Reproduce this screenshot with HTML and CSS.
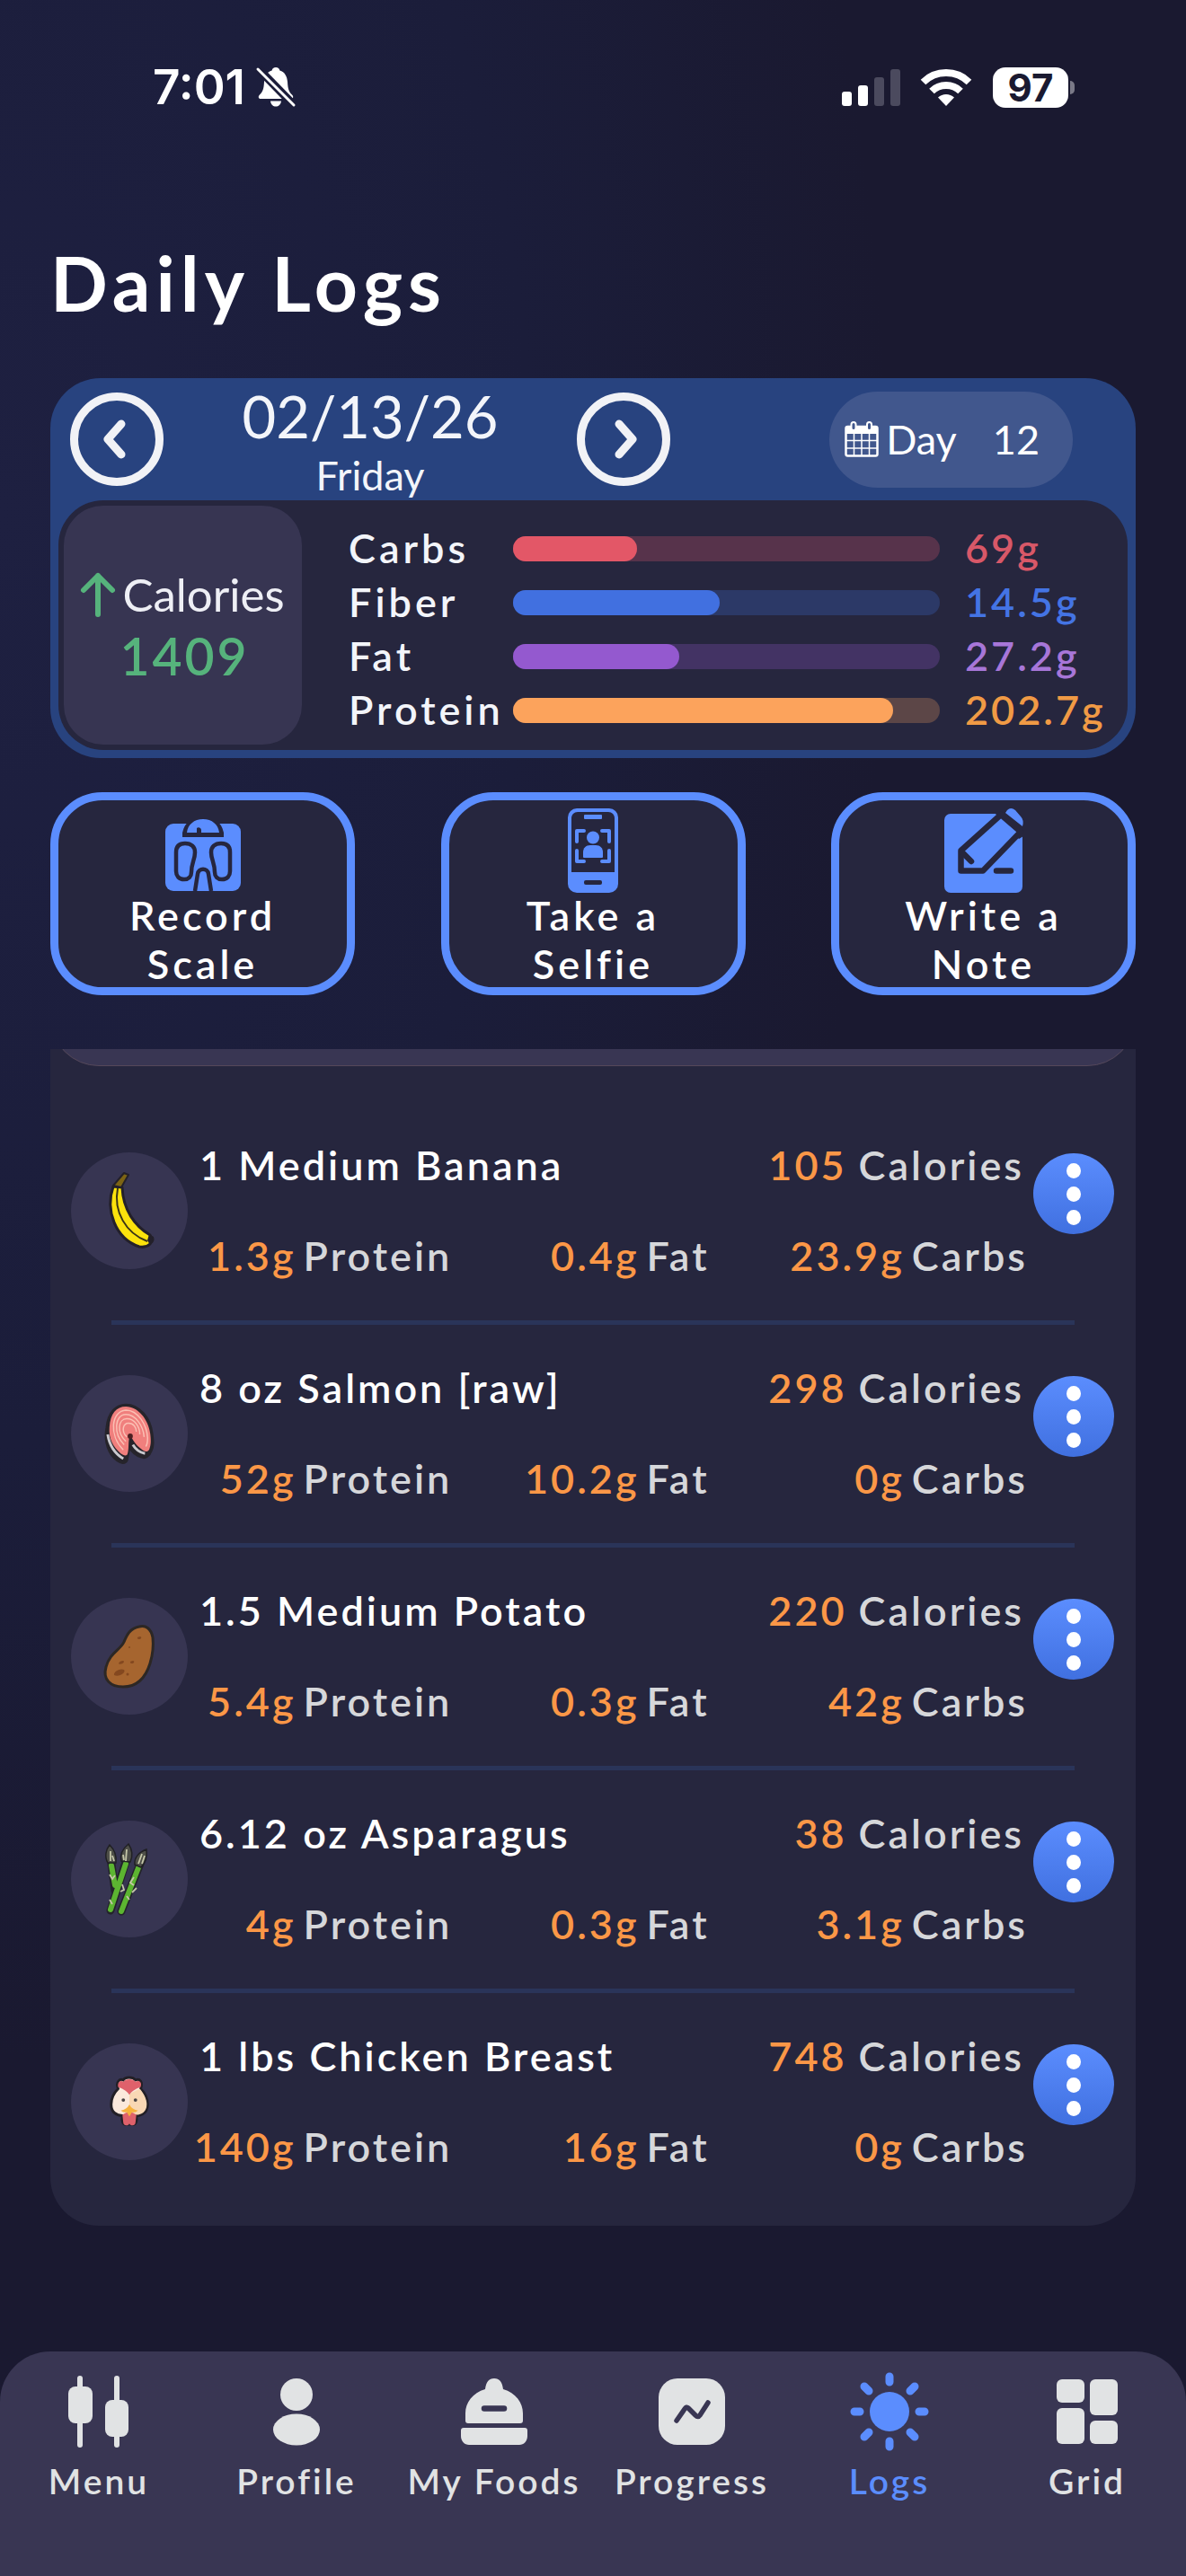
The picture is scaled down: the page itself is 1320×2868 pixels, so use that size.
FILE: index.html
```html
<!DOCTYPE html>
<html lang="en">
<head>
<meta charset="utf-8">
<meta name="viewport" content="width=device-width, initial-scale=1">
<title>Daily Logs</title>
<link rel="stylesheet" href="styles.css">
</head>
<body>
<div class="app">
  <div class="status">
    <div class="status-time">
      <span>7:01</span>
      <svg width="44" height="46" viewBox="0 0 44 46" aria-hidden="true">
        <path fill="#fff" d="M22 1c2.500 0 4 1.500 4.400 3.400C32 6 34.500 11 35 17c.4 8 1.500 11 5 14.500 2 2 1.500 4.500-1 4.500H5c-2.500 0-3-2.500-1-4.500C7.500 28 8.600 25 9 17c.5-6 3-11 8.600-12.600C18 2.500 19.500 1 22 1zM16 38.500h12c-.6 4-3 6-6 6s-5.400-2-6-6z"/>
        <path stroke="#1c1d3a" stroke-width="9" d="M2 2l40 41"/>
        <path stroke="#fff" stroke-width="3" stroke-linecap="round" d="M2 3l40 40"/>
      </svg>
    </div>
    <div class="status-signs">
      <svg width="64" height="42" viewBox="0 0 64 42" aria-hidden="true">
        <rect x="0" y="26" width="11" height="16" rx="3" fill="#fff"/>
        <rect x="18" y="19" width="11" height="23" rx="3" fill="#fff"/>
        <rect x="36" y="10" width="11" height="32" rx="3" fill="#4b4a5e"/>
        <rect x="54" y="1" width="11" height="41" rx="3" fill="#4b4a5e"/>
      </svg>
      <svg width="56" height="42" viewBox="1 0 56 42" aria-hidden="true">
        <path fill="none" stroke="#fff" stroke-width="8" d="M3.500 15.500a36.500 36.500 0 0 1 51 0M13 25.500a23 23 0 0 1 32 0"/>
        <path fill="#fff" d="M29 42l-9-9.500a13 13 0 0 1 18 0z"/>
      </svg>
      <div class="battery"><span>97</span></div>
    </div>
  </div>

  <main class="content">
    <h1 class="title">Daily Logs</h1>

    <section class="summary" aria-label="Daily summary">
      <div class="summary-head">
        <button class="round" type="button" aria-label="Previous day">
          <svg width="28" height="44" viewBox="0 0 28 44" aria-hidden="true"><path d="M19 5L4 22l15 17"/></svg>
        </button>
        <div class="date"><span class="date-day">02/13/26</span><span class="date-name">Friday</span></div>
        <button class="round" type="button" aria-label="Next day">
          <svg width="28" height="44" viewBox="0 0 28 44" aria-hidden="true"><path d="M9 5l15 17L9 39"/></svg>
        </button>
        <button class="day" type="button">
          <svg width="38" height="40" viewBox="0 0 38 40" aria-hidden="true">
            <rect x="1.500" y="6" width="35" height="32.500" rx="2" fill="none" stroke="#fff" stroke-width="2.500"/>
            <path fill="#fff" d="M2 5h34v9H2z"/>
            <path stroke="#fff" stroke-width="1.500" d="M10.500 13v25M19 13v25M27.500 13v25M2 21.500h34M2 30h34"/>
            <rect x="7.500" y="1" width="5" height="9" rx="2.500" fill="#41578d" stroke="#fff" stroke-width="2"/>
            <rect x="25" y="1" width="5" height="9" rx="2.500" fill="#41578d" stroke="#fff" stroke-width="2"/>
          </svg>
          <span>Day</span><span class="day-count">12</span>
        </button>
      </div>
      <div class="summary-body">
        <div class="calories">
          <div class="calories-name">
            <svg width="38" height="50" viewBox="0 0 38 50" aria-hidden="true"><path d="M19 47V4M3 20L19 4l16 16"/></svg>
            <span>Calories</span>
          </div>
          <strong class="calories-total">1409</strong>
        </div>
        <ul class="macros">
          <li class="macro carbs"><span class="macro-name">Carbs</span><span class="bar"><span class="fill" style="width:29%"></span></span><span class="macro-value">69g</span></li>
          <li class="macro fiber"><span class="macro-name">Fiber</span><span class="bar"><span class="fill" style="width:48.500%"></span></span><span class="macro-value">14.5g</span></li>
          <li class="macro fat"><span class="macro-name">Fat</span><span class="bar"><span class="fill" style="width:39%"></span></span><span class="macro-value">27.2g</span></li>
          <li class="macro protein"><span class="macro-name">Protein</span><span class="bar"><span class="fill" style="width:89%"></span></span><span class="macro-value">202.7g</span></li>
        </ul>
      </div>
    </section>

    <div class="actions">
      <button class="action" type="button">
        <svg width="88" height="94" viewBox="-2 -12 88 94" aria-hidden="true">
          <rect y="5" width="84" height="75" rx="9" fill="#5b8dfe"/>
          <path fill="#26263e" d="M19 20v-5C21 8 23 4 26 4h32c3 0 5 4 7 11v5z"/>
          <path fill="#5b8dfe" d="M24 15C25 6 32 0 42 0s17 6 18 15H40v-3a3 3 0 0 0-5-2v5z"/>
          <path fill="none" stroke="#26263e" stroke-width="4.500" stroke-linejoin="round" d="M22 27c-7 0-10 4-10 10v21c0 5 3 9 9 9 5 0 8-3 8-8 0-10 4-14 4-22 0-6-4-10-11-10zM62 27c7 0 10 4 10 10v21c0 5-3 9-9 9-5 0-8-3-8-8 0-10-4-14-4-22 0-6 4-10 11-10zM33 80l3-19c1-7 11-7 12 0l3 19"/>
        </svg>
        <span>Record<br>Scale</span>
      </button>
      <button class="action" type="button">
        <svg width="56" height="94" viewBox="0 0 56 94" aria-hidden="true">
          <rect width="56" height="94" rx="10" fill="#5b8dfe"/>
          <path fill="#26263e" d="M4 71V11c0-4 3-7 7-7h34c4 0 7 3 7 7v60z"/>
          <rect x="18" y="7" width="20" height="5" rx="1" fill="#5b8dfe"/>
          <rect x="18" y="80" width="20" height="5" rx="2" fill="#26263e"/>
          <path fill="none" stroke="#5b8dfe" stroke-width="4" stroke-linecap="round" stroke-linejoin="round" d="M10 37V25h8M38 25h8v12M46 47v12h-8M18 59h-8V47"/>
          <circle cx="28" cy="32.500" r="7" fill="#5b8dfe"/>
          <path fill="#5b8dfe" d="M17 54v-5c0-5 3-8 8-8h6c5 0 8 3 8 8v5q0 1-1 1H18q-1 0-1-1z"/>
        </svg>
        <span>Take a<br>Selfie</span>
      </button>
      <button class="action" type="button">
        <svg width="88" height="94" viewBox="0 0 88 94" aria-hidden="true">
          <rect y="6" width="87" height="88" rx="7" fill="#5b8dfe"/>
          <path fill="#26263e" d="M56 5L64-1h24v32l-5 3z"/>
          <path fill="#5b8dfe" stroke="#26263e" stroke-width="6.500" stroke-linejoin="round" d="M63 7l22 19-42 43.500H18.500V47z"/>
          <path fill="none" stroke="#26263e" stroke-width="6.500" stroke-linecap="round" d="M20 49l10 10M58 69.500h16"/>
          <path fill="#5b8dfe" d="M70 2q4-4 9 0l6 7q4 4 2 11L68 5z"/>
        </svg>
        <span>Write a<br>Note</span>
      </button>
    </div>

    <section class="log" aria-label="Foods logged">
      <div class="log-peek"><div class="log-peek-card"></div></div>
      <ul class="entries">
        <li class="entry">
          <div class="entry-row">
            <div class="food">
              <svg width="60" height="86" viewBox="0 0 60 86" aria-hidden="true">
                <path fill="#fbe20c" stroke="#23202a" stroke-width="3" stroke-linejoin="round" d="M12 16C3 42 14 74 41 83c5 1 9 0 12-3l2-5-2-5C36 60 23 42 22 17z"/>
                <path fill="none" stroke="#3a3516" stroke-width="2" d="M17 18C12 44 26 68 50 77"/>
                <path fill="#7d6414" stroke="#23202a" stroke-width="2" stroke-linejoin="round" d="M12 15l12-14 5 2-8 14z"/>
                <path fill="#23202a" d="M52 69l5 3q2 6-4 9l-3-5z"/>
              </svg>
            </div>
            <div class="entry-text">
              <div class="entry-top"><span class="name">1 Medium Banana</span><span class="kcal"><b>105</b>Calories</span></div>
              <div class="entry-macros"><span><b>1.3g</b>Protein</span><span><b>0.4g</b>Fat</span><span><b>23.9g</b>Carbs</span></div>
            </div>
            <button class="more" type="button" aria-label="Banana options"><i></i><i></i><i></i></button>
          </div>
        </li>
        <li class="entry">
          <div class="entry-row">
            <div class="food">
              <svg width="56" height="70" viewBox="0 0 58 70" aria-hidden="true">
                <path fill="#26242b" stroke="#26242b" stroke-width="3" stroke-linejoin="round" d="M3 28C5 10 14 2 25 2c15 0 28 15 30 33 1 8 2 14-1 20-2 6-7 9-11 7-7-2-11-6-14-12l-3 16c-2 4-7 3-11 0C5 59 0 44 3 28z"/>
                <path fill="none" stroke="#c9c9ce" stroke-width="3" d="M4 36c2 13 8 22 18 28M33 48c3 5 7 9 14 10"/>
                <path fill="#f07f7d" d="M6 28C7 12 14 4 25 4c14 0 26 15 28 31 1 8 1 13-1 18-2 4-6 3-9 0-7-5-10-11-13-16-3 6-1 14-3 21-1 4-5 2-8 0C10 50 5 41 6 28z"/>
                <path fill="none" stroke="#fbc0b4" stroke-width="1.500" d="M22 54C5 37 8 9 25 8c14 0 24 17 25 32 0 4 0 7-2 10M23 48C10 35 12 13 25 13c11 0 20 13 21 26M25 44c-11-10-9-26 1-26 9 0 15 9 15 18M26 39c-7-7-4-16 2-16 6 0 9 5 9 10"/>
                <circle cx="30" cy="38" r="3" fill="#4a2022"/>
              </svg>
            </div>
            <div class="entry-text">
              <div class="entry-top"><span class="name">8 oz Salmon [raw]</span><span class="kcal"><b>298</b>Calories</span></div>
              <div class="entry-macros"><span><b>52g</b>Protein</span><span><b>10.2g</b>Fat</span><span><b>0g</b>Carbs</span></div>
            </div>
            <button class="more" type="button" aria-label="Salmon options"><i></i><i></i><i></i></button>
          </div>
        </li>
        <li class="entry">
          <div class="entry-row">
            <div class="food">
              <svg width="56" height="52" viewBox="2 11 56 52" aria-hidden="true">
                <path fill="#a6652f" stroke="#2c2724" stroke-width="3" d="M56 16C54 6 48 2 41 4 30 6 27 14 24 21 20 30 8 33 4 49 0 63 9 71 23 71c16 0 25-10 30-26 3-10 4-20 3-29z"/>
                <path fill="#84481f" d="M13 58c-1-4 7-8 11-6 3 3-6 9-11 6zM18 45c1-3 6-4 6-2s-5 4-6 2zM31 43c3-2 5-1 4 1s-5 1-4-1zM39 16c3-2 5-1 4 1s-5 1-4-1z"/>
                <circle cx="28" cy="57" r="1.500" fill="#84481f"/><circle cx="30" cy="27" r="1" fill="#84481f"/>
              </svg>
            </div>
            <div class="entry-text">
              <div class="entry-top"><span class="name">1.5 Medium Potato</span><span class="kcal"><b>220</b>Calories</span></div>
              <div class="entry-macros"><span><b>5.4g</b>Protein</span><span><b>0.3g</b>Fat</span><span><b>42g</b>Carbs</span></div>
            </div>
            <button class="more" type="button" aria-label="Potato options"><i></i><i></i><i></i></button>
          </div>
        </li>
        <li class="entry">
          <div class="entry-row">
            <div class="food">
              <svg width="50" height="86" viewBox="4 0 50 86" aria-hidden="true">
                <g stroke="#23232a" stroke-width="9" stroke-linecap="round"><path d="M9 26l4 30M25 24L8 78M41 26L20 79"/></g>
                <g stroke="#5cb531" stroke-width="6" stroke-linecap="round"><path d="M9 28l4 22M25 26L8 77M40 28L20 79"/></g>
                <g fill="#4e4f48" stroke="#202024" stroke-width="1.500"><path d="M5 25C1 18 3 10 7 5c5 5 8 12 7 20zM20 23c-2-7 2-14 8-19 4 6 5 13 2 20zM35 27c-1-8 5-14 13-17 1 8-1 15-6 20z"/></g>
                <g fill="none" stroke="#c4c6a8" stroke-width="1.800"><path d="M8 12v11M26 10l-1 13M43 15l-4 11M10 17l2 6M22 16l1 6M46 17l-3 9M7 38l3 5 3-4M21 49l2 6-4 2M34 41l-4 6 4 3M29 66l-3-4M7 66l3 5M37 53l-5 5"/></g>
              </svg>
            </div>
            <div class="entry-text">
              <div class="entry-top"><span class="name">6.12 oz Asparagus</span><span class="kcal"><b>38</b>Calories</span></div>
              <div class="entry-macros"><span><b>4g</b>Protein</span><span><b>0.3g</b>Fat</span><span><b>3.1g</b>Carbs</span></div>
            </div>
            <button class="more" type="button" aria-label="Asparagus options"><i></i><i></i><i></i></button>
          </div>
        </li>
        <li class="entry">
          <div class="entry-row">
            <div class="food">
              <svg width="40" height="56" viewBox="2 0 40 58" aria-hidden="true">
                <path fill="#fbe9dc" stroke="#221f26" stroke-width="3" d="M9 14C6 6 11 2 15 4c2-4 11-4 14 0 5-2 9 2 6 10 5 5 8 12 8 18 0 9-6 13-13 13 1 6 0 10-4 10h-8c-4 0-5-4-4-10C7 45 1 41 1 32c0-6 3-13 8-18z"/>
                <path fill="#f9d8b4" d="M22 20l12-6c5 6 8 13 8 18 0 8-6 12-12 12h-8z"/>
                <path fill="#df616b" d="M9 12c-1-6 3-8 6-6 2-4 12-4 14 0 4-2 8 0 6 6-4 2-9 3-13 9-4-6-9-7-13-9zM14 44q8-6 16 0l-1 9c0 4-6 4-7 1-1 3-7 3-7-1z"/>
                <path fill="#f6b13d" d="M12 39q7-1 10-7 3 6 10 7-4 3-7 2l-3 5-3-5q-3 1-7-2z"/>
                <circle cx="15" cy="27" r="2" fill="#4a4545"/><circle cx="29" cy="27" r="2" fill="#4a4545"/>
              </svg>
            </div>
            <div class="entry-text">
              <div class="entry-top"><span class="name">1 lbs Chicken Breast</span><span class="kcal"><b>748</b>Calories</span></div>
              <div class="entry-macros"><span><b>140g</b>Protein</span><span><b>16g</b>Fat</span><span><b>0g</b>Carbs</span></div>
            </div>
            <button class="more" type="button" aria-label="Chicken options"><i></i><i></i><i></i></button>
          </div>
        </li>
      </ul>
    </section>
  </main>

  <nav class="tabs" aria-label="Main">
    <a class="tab" href="#menu">
      <svg width="88" height="88" viewBox="0 0 88 88" aria-hidden="true">
        <path stroke="currentColor" stroke-width="6" stroke-linecap="round" d="M23 7v74M64 7v74"/>
        <rect x="10" y="16" width="27" height="41" rx="8" fill="currentColor"/><rect x="51" y="31" width="26" height="41" rx="8" fill="currentColor"/>
      </svg>
      <span>Menu</span>
    </a>
    <a class="tab" href="#profile">
      <svg width="88" height="88" viewBox="0 0 88 88" aria-hidden="true"><circle cx="44" cy="25" r="18" fill="currentColor"/><ellipse cx="44" cy="64" rx="26" ry="17.500" fill="currentColor"/></svg>
      <span>Profile</span>
    </a>
    <a class="tab" href="#foods">
      <svg width="88" height="88" viewBox="0 0 88 88" aria-hidden="true">
        <path fill="currentColor" d="M15 57q-3 0-3-3v-8c0-12 8-23 22-27 1-8 4-12 10-12s9 4 10 12c14 4 22 15 22 27v8q0 3-3 3z"/>
        <path stroke="#393653" stroke-width="6.500" stroke-linecap="round" d="M33 40.500h22"/>
        <path fill="currentColor" d="M10 62h68q3 0 3 3v6c0 6-4 10-9 10H16c-5 0-9-4-9-10v-6q0-3 3-3z"/>
      </svg>
      <span>My Foods</span>
    </a>
    <a class="tab" href="#progress">
      <svg width="88" height="88" viewBox="0 0 88 88" aria-hidden="true">
        <rect x="7" y="7" width="74" height="74" rx="21" fill="currentColor"/>
        <path fill="none" stroke="#393653" stroke-width="5.500" stroke-linecap="round" stroke-linejoin="round" d="M27 54l9-13q2-3 4-1l8 8q3 3 5 0l9-14"/>
      </svg>
      <span>Progress</span>
    </a>
    <a class="tab active" href="#logs" aria-current="page">
      <svg width="88" height="88" viewBox="0 0 88 88" aria-hidden="true">
        <circle cx="44" cy="44" r="22" fill="currentColor"/>
        <path stroke="currentColor" stroke-width="9" stroke-linecap="round" d="M44 5v6M44 77v6M5 44h6M77 44h6M16 16l5 5M67 67l5 5M16 72l5-5M67 21l5-5"/>
      </svg>
      <span>Logs</span>
    </a>
    <a class="tab" href="#grid">
      <svg width="88" height="88" viewBox="0 0 88 88" aria-hidden="true">
        <g fill="currentColor"><rect x="10" y="8" width="31" height="26" rx="6"/><rect x="10" y="40" width="31" height="40" rx="6"/><rect x="47" y="8" width="31" height="40" rx="6"/><rect x="47" y="54" width="31" height="26" rx="6"/></g>
      </svg>
      <span>Grid</span>
    </a>
  </nav>
</div>
</body>
</html>
```
FILE: styles.css
```css
* { box-sizing: border-box; }

body {
  margin: 0;
  background: #1a1930;
  color: #fff;
  font-family: Lato, "Noto Sans", sans-serif;
  font-size: 45px;
  font-weight: 600;
  line-height: 54px;
}

ul { margin: 0; padding: 0; list-style: none; }

button {
  margin: 0;
  padding: 0;
  border: 0;
  background: none;
  color: inherit;
  font: inherit;
  cursor: pointer;
}

svg { display: block; flex: none; overflow: visible; }

.app {
  display: flex;
  flex-direction: column;
  min-height: 100vh;
  background: radial-gradient(ellipse 75% 60% at 0% 20%, #1e2041 0%, #1b1d3a 60%, #1a1930 100%), #1a1930;
}

/* Status bar */
.status {
  display: flex;
  justify-content: space-between;
  align-items: center;
  padding: 65px 123px 0 170px;
  font-family: Inter, "Liberation Sans", sans-serif;
  line-height: 64px;
}

.status-time { display: flex; align-items: center; gap: 12px; font-size: 53px; font-weight: 600; }
.status-signs { display: flex; align-items: center; gap: 24px; }

.battery {
  position: relative;
  width: 84px;
  height: 45px;
  margin-right: 8px;
  border-radius: 14px;
  background: #fff;
  color: #1a1930;
  font-size: 42px;
  font-weight: 700;
  line-height: 45px;
  text-align: center;
}

.battery::after {
  content: "";
  position: absolute;
  top: 15px;
  right: -7px;
  width: 5px;
  height: 15px;
  border-radius: 0 5px 5px 0;
  background: #7a7987;
}

.content { padding: 0 56px; }

.title {
  margin: 136px 0 56px;
  font-size: 84px;
  font-weight: 700;
  line-height: 100px;
  letter-spacing: 6px;
}

/* Summary card */
.summary {
  padding: 0 9px 9px;
  border-radius: 56px;
  background: #28437f;
}

.summary-head { display: flex; align-items: center; height: 136px; padding: 0 61px 0 13px; }

.round {
  display: grid;
  place-items: center;
  flex: none;
  width: 104px;
  height: 104px;
  border: 9px solid #f1f2f6;
  border-radius: 50%;
}

.round path { fill: none; stroke: #f1f2f6; stroke-width: 9; stroke-linecap: round; stroke-linejoin: round; }

.date {
  display: flex;
  flex: 0 1 460px;
  flex-direction: column;
  align-items: center;
  padding-top: 4px;
  color: #f3f5fa;
  font-weight: 400;
}

.date-day { font-size: 65px; line-height: 76px; }
.date-name { line-height: 56px; }

.day {
  display: flex;
  align-items: center;
  gap: 8px;
  height: 107px;
  margin-left: auto;
  padding: 0 37px 0 17px;
  border-radius: 54px;
  background: #41578d;
  font-weight: 400;
}

.day-count { margin-left: 32px; }

.summary-body {
  display: flex;
  padding: 6px 0 6px 6px;
  border-radius: 50px;
  background: #26263e;
}

.calories {
  display: flex;
  flex: none;
  flex-direction: column;
  align-items: center;
  justify-content: center;
  width: 265px;
  height: 266px;
  padding-top: 4px;
  border-radius: 44px;
  background: #373552;
}

.calories-name {
  display: flex;
  align-items: center;
  gap: 8px;
  color: #eeeff5;
  font-size: 51px;
  font-weight: 400;
  line-height: 64px;
}

.calories-name path { fill: none; stroke: #56b37c; stroke-width: 6; stroke-linecap: round; stroke-linejoin: round; }

.calories-total {
  padding-left: 4px;
  color: #56b37c;
  font-size: 57px;
  font-weight: 600;
  line-height: 72px;
  letter-spacing: 3px;
}

.macros { flex: 1; padding: 18px 0 0 52px; }

.macro {
  display: grid;
  grid-template-columns: 183px 1fr 209px;
  align-items: center;
  height: 60px;
  letter-spacing: 3px;
}

.macro-name, .macro-value { padding-bottom: 3px; }
.macro-name { color: #f3f5fa; letter-spacing: 4px; }
.macro-value { padding-left: 28px; color: var(--tone); }
.bar { height: 28px; border-radius: 14px; background: var(--track); }
.fill { display: block; height: 28px; border-radius: 14px; background: var(--solid); }

.carbs { --tone: #d85868; --solid: #e35767; --track: #57334b; }
.fiber { --tone: #4474e4; --solid: #4170e0; --track: #2c3967; }
.fat { --tone: #a776d8; --solid: #9459cf; --track: #433364; }
.protein { --tone: #f09a45; --solid: #fca35c; --track: #5c4647; }

/* Quick actions */
.actions {
  display: flex;
  justify-content: space-between;
  margin: 38px 0 60px;
}

.action {
  display: flex;
  flex: 0 1 339px;
  flex-direction: column;
  align-items: center;
  height: 226px;
  padding-top: 9px;
  border: 9px solid #5b8dfe;
  border-radius: 58px;
  background: #26263e;
  letter-spacing: 4px;
}

.action svg { margin-bottom: -2px; }

/* Food log */
.log {
  padding-bottom: 16px;
  border-radius: 0 0 54px 54px;
  background: #26263e;
}

.log-peek { display: flex; align-items: flex-end; height: 19px; margin-bottom: 40px; overflow: hidden; }

.log-peek-card {
  flex: 1;
  height: 110px;
  border: 1px solid #55485a;
  border-radius: 54px;
  background: #393653;
}

.entry::after {
  content: "";
  display: block;
  height: 5px;
  margin: 0 68px;
  background: #2a3459;
}

.entry:last-child::after { display: none; }

.entry-row {
  display: grid;
  grid-template-columns: 130px 1fr 90px;
  align-items: center;
  height: 243px;
  padding: 0 24px 2px 23px;
  letter-spacing: 3px;
}

.food {
  display: grid;
  place-items: center;
  height: 130px;
  border-radius: 50%;
  background: #373552;
}

.entry-text { display: grid; gap: 47px; padding-right: 6px; }

.entry-top {
  display: flex;
  justify-content: space-between;
  padding: 0 4px 0 13px;
  white-space: nowrap;
}

.entry-macros {
  display: grid;
  grid-template-columns: 294fr 286fr 354fr;
  white-space: nowrap;
}

.kcal { display: flex; gap: 13px; }
.entry-macros span { display: flex; justify-content: flex-end; gap: 8px; }
.kcal, .entry-macros { color: #d6d7da; }
.entry b { color: #fb9747; font-weight: 600; }

.more {
  display: flex;
  flex-direction: column;
  align-items: center;
  align-self: start;
  gap: 9px;
  height: 90px;
  margin-top: 57px;
  padding-top: 11px;
  border-radius: 50%;
  background: linear-gradient(#5b8dfe, #4070e0);
}

.more i { width: 16px; height: 17px; border-radius: 50%; background: #fff; }

/* Tab bar */
.tabs {
  display: grid;
  grid-template-columns: repeat(6, 1fr);
  height: 250px;
  margin-top: auto;
  padding-top: 23px;
  border-radius: 56px 56px 0 0;
  background: #393653;
}

.tab {
  display: flex;
  flex-direction: column;
  align-items: center;
  gap: 9px;
  color: #e1e3e4;
  font-size: 39px;
  font-weight: 600;
  line-height: 48px;
  letter-spacing: 3px;
  text-decoration: none;
  white-space: nowrap;
}

.tab.active { color: #5b8dfe; }
```
